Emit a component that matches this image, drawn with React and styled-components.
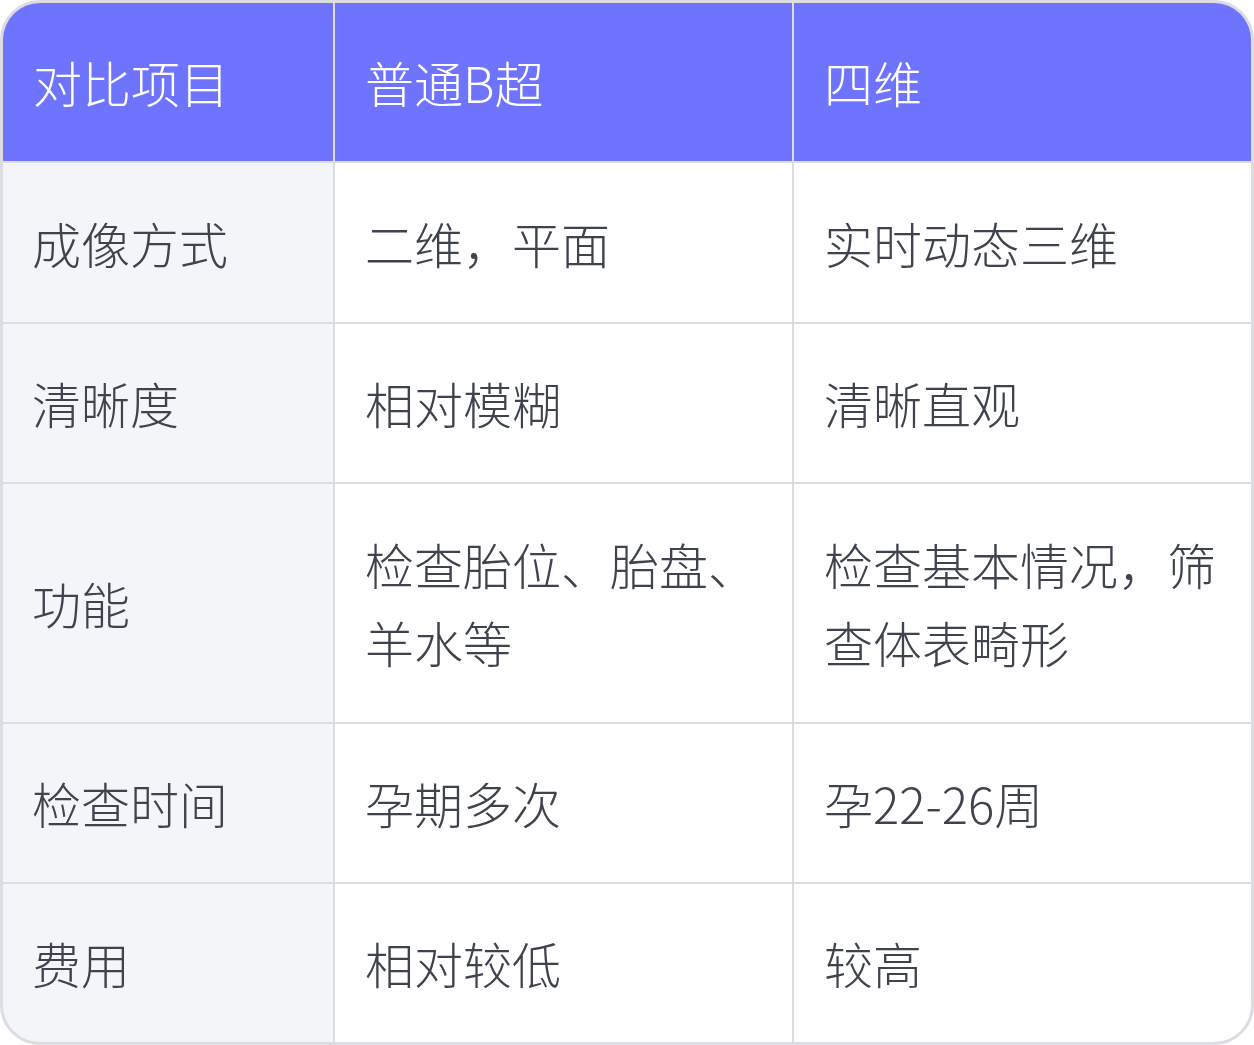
import React from 'react';
import styled, { createGlobalStyle } from 'styled-components';

const GlobalStyle = createGlobalStyle`
  html, body {
    margin: 0;
    padding: 0;
    background: #ffffff;
  }
  body {
    font-family: 'Noto Sans CJK SC', 'Noto Sans', sans-serif;
  }
`;

// 표 데이터
const headers = ['对比项目', '普通B超', '四维'];

const rows = [
  { label: '成像方式', normal: '二维，平面', fourD: '实时动态三维', height: 159 },
  { label: '清晰度', normal: '相对模糊', fourD: '清晰直观', height: 158 },
  { label: '功能', normal: '检查胎位、胎盘、羊水等', fourD: '检查基本情况，筛查体表畸形', height: 238 },
  { label: '检查时间', normal: '孕期多次', fourD: '孕22-26周', height: 158 },
  { label: '费用', normal: '相对较低', fourD: '较高', height: 158 }
];

const App = () => {
  const rowTemplate = ['158px', ...rows.map(r => `${r.height}px`)].join(' ');

  return (
    <>
      <GlobalStyle />
      <Table style={{ gridTemplateRows: rowTemplate }}>
        {headers.map(h => (
          <HeaderCell key={h}>{h}</HeaderCell>
        ))}
        {rows.map(r => (
          <React.Fragment key={r.label}>
            <LabelCell>{r.label}</LabelCell>
            <Cell>{r.normal}</Cell>
            <Cell>{r.fourD}</Cell>
          </React.Fragment>
        ))}
      </Table>
    </>
  );
};

const Table = styled.div`
  box-sizing: border-box;
  width: 1254px;
  height: 1045px;
  display: grid;
  grid-template-columns: 330px 457px 457px;
  gap: 2px;
  background: #dcdde2;
  border: 3px solid #dcdde2;
  border-radius: 40px;
  overflow: hidden;
`;

const BaseCell = styled.div`
  display: flex;
  align-items: center;
  box-sizing: border-box;
  padding: 0 30px 0 30px;
  font-size: 49px;
  font-weight: 300;
  line-height: 78px;
`;

const HeaderCell = styled(BaseCell)`
  background: #6f74ff;
  color: #ffffff;
`;

const LabelCell = styled(BaseCell)`
  background: #f4f5f9;
  color: #3f434e;
  padding-left: 29px;
`;

const Cell = styled(BaseCell)`
  background: #ffffff;
  color: #3f434e;
`;

export default App;
